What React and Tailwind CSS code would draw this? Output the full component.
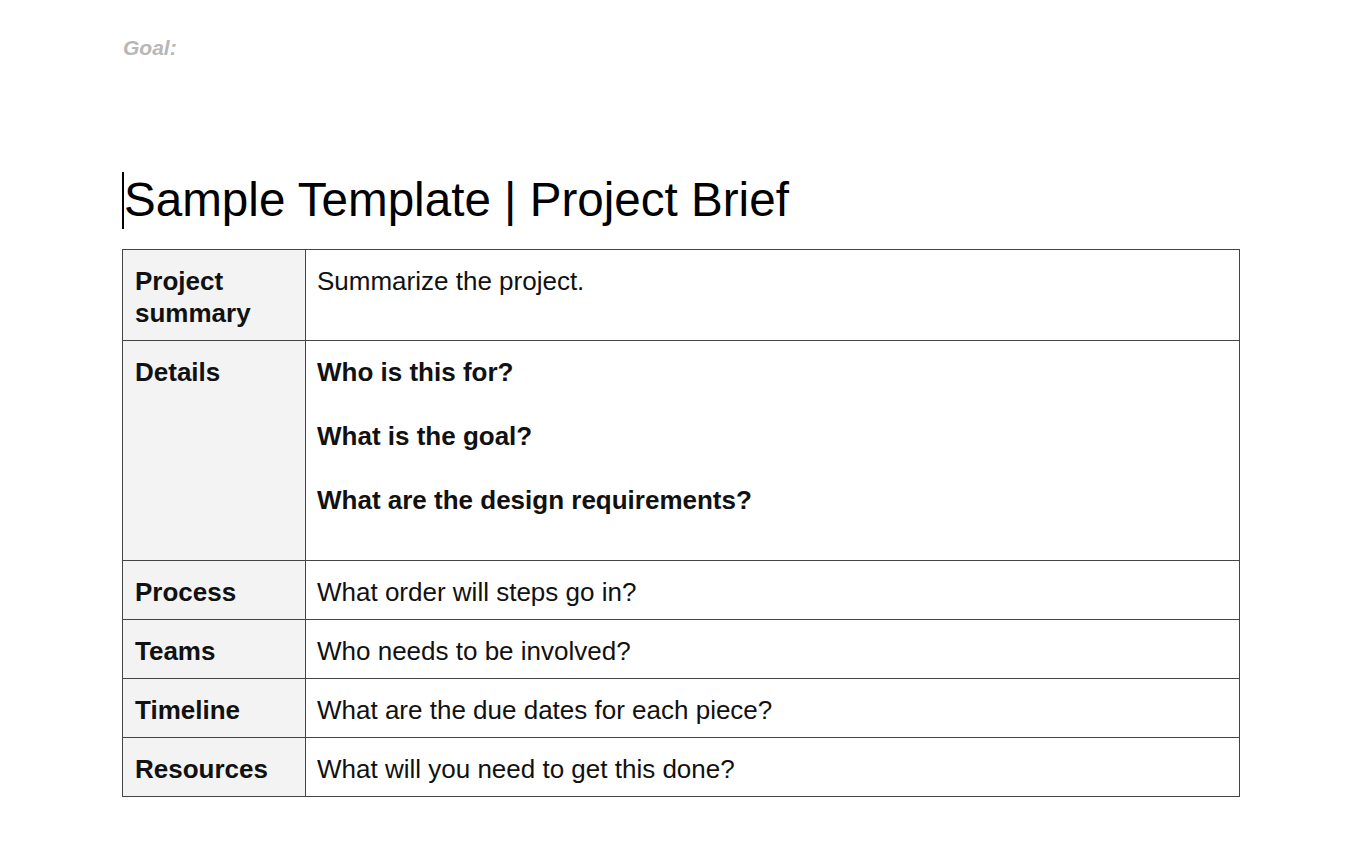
import React from 'react';

const rows = [
  { label: ['Project', 'summary'], body: <p>Summarize the project.</p> },
  {
    label: ['Details'],
    body: (
      <div className="font-bold pb-px">
        <p>Who is this for?</p>
        <p className="mt-[32px]">What is the goal?</p>
        <p className="mt-[32px]">What are the design requirements?</p>
        <p>&nbsp;</p>
      </div>
    ),
  },
  { label: ['Process'], body: <p>What order will steps go in?</p> },
  { label: ['Teams'], body: <p>Who needs to be involved?</p> },
  { label: ['Timeline'], body: <p>What are the due dates for each piece?</p> },
  { label: ['Resources'], body: <p>What will you need to get this done?</p> },
];

const App = () => {
  return (
    <div
      className="min-h-[848px] bg-white pl-[122px] text-black"
      style={{ fontFamily: '"Liberation Sans", Arial, sans-serif' }}
    >
      {/* Goal label */}
      <div className="pt-[36px] text-[21px] leading-[24px] font-bold italic text-[#b7b7b7] pl-px">Goal:</div>

      {/* Title with text cursor */}
      <div className="mt-[112px] flex items-center h-[56px]">
        <span className="inline-block w-[2px] h-[57px] bg-black" />
        <h1 className="text-[47.6px] leading-[56px] font-normal">Sample Template | Project Brief</h1>
      </div>

      {/* Brief table */}
      <table className="mt-[21px] w-[1118px] border-collapse text-[26px] leading-[32px] text-[#111]">
        <tbody>
          {rows.map((row, i) => (
            <tr key={i}>
              <td className="w-[183px] align-top border border-[#444] bg-[#f3f3f3] pl-[12px] pr-2 pt-[15px] pb-[11px] font-bold">
                {row.label.map((l) => (
                  <p key={l}>{l}</p>
                ))}
              </td>
              <td className="align-top border border-[#444] pl-[11px] pr-2 pt-[15px] pb-[11px]">{row.body}</td>
            </tr>
          ))}
        </tbody>
      </table>
    </div>
  );
};

export default App;
